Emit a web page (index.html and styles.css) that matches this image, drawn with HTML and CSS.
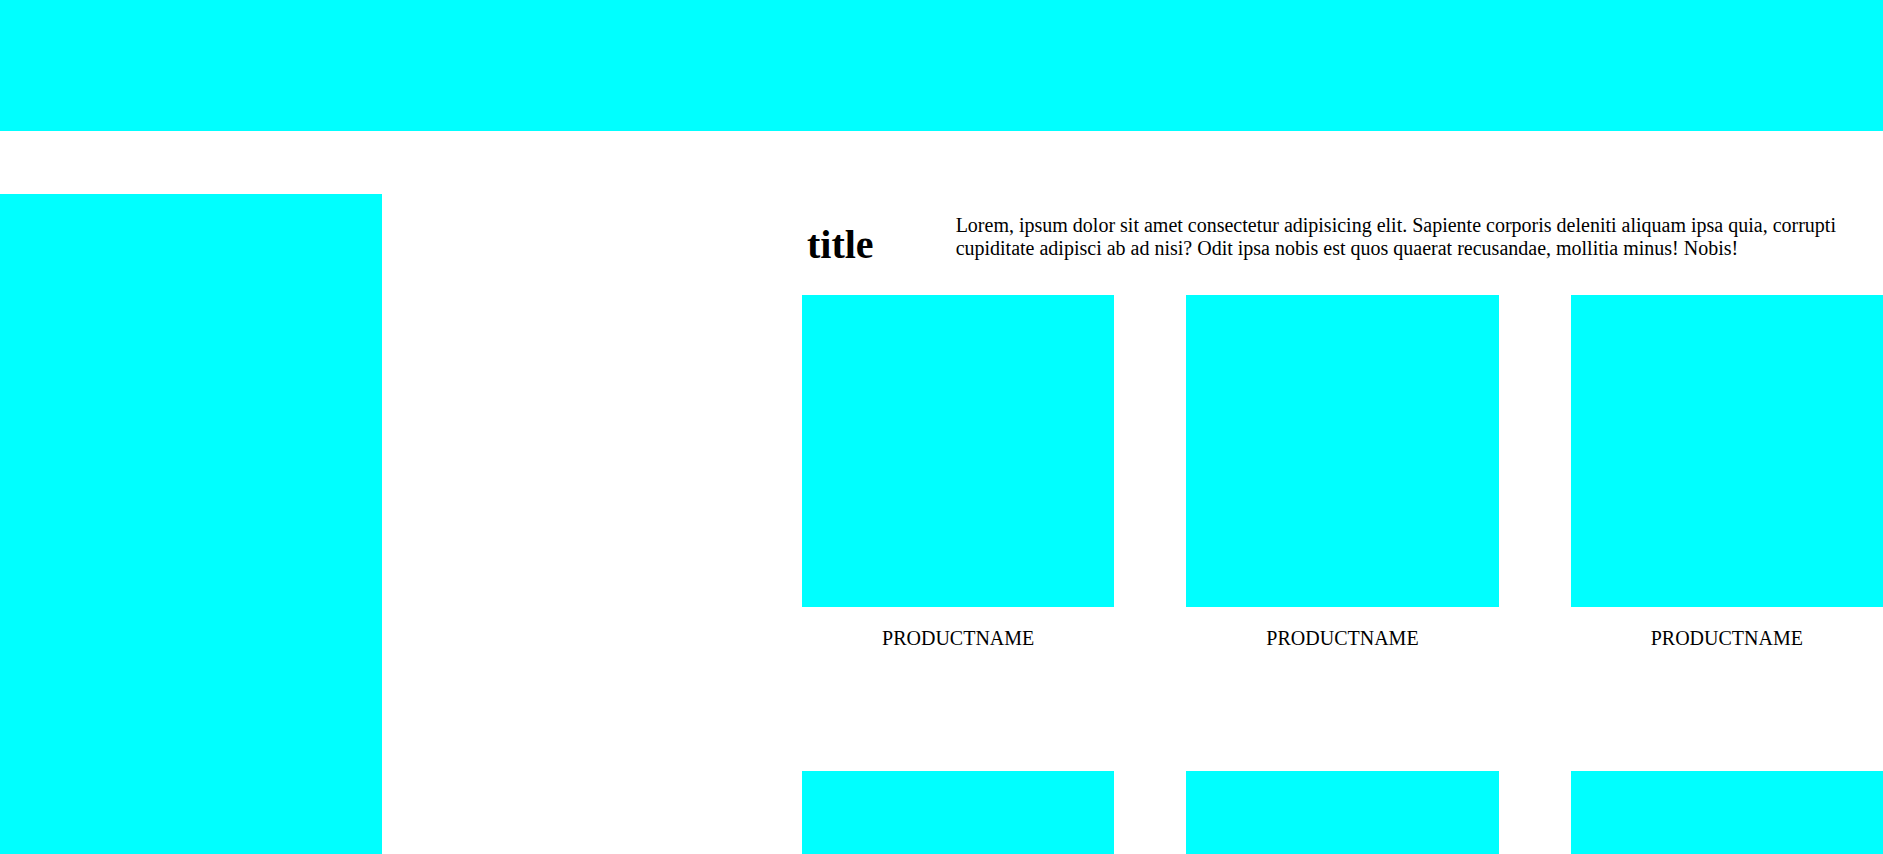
FILE: index.html
```html
<!DOCTYPE html>
<html lang="en">
<head>
<meta charset="utf-8">
<title>Products</title>
<link rel="stylesheet" href="styles.css">
</head>
<body>
<header class="topbar"></header>
<div class="layout">
  <aside class="sidebar"></aside>
  <main class="content">
    <div class="intro">
      <h1 class="title">title</h1>
      <p class="lead">Lorem, ipsum dolor sit amet consectetur adipisicing elit. Sapiente corporis deleniti aliquam ipsa quia, corrupti cupiditate adipisci ab ad nisi? Odit ipsa nobis est quos quaerat recusandae, mollitia minus! Nobis!</p>
    </div>
    <div class="products">
      <div class="card"><div class="card-img"></div><p class="card-name">PRODUCTNAME</p></div>
      <div class="card"><div class="card-img"></div><p class="card-name">PRODUCTNAME</p></div>
      <div class="card"><div class="card-img"></div><p class="card-name">PRODUCTNAME</p></div>
      <div class="card"><div class="card-img"></div><p class="card-name">PRODUCTNAME</p></div>
      <div class="card"><div class="card-img"></div><p class="card-name">PRODUCTNAME</p></div>
      <div class="card"><div class="card-img"></div><p class="card-name">PRODUCTNAME</p></div>
    </div>
  </main>
</div>
</body>
</html>
```
FILE: styles.css
```css
html, body {
  margin: 0;
  padding: 0;
}
body {
  font-family: "Liberation Serif", "Times New Roman", serif;
  font-size: 20px;
  color: #000;
  background: #fff;
}
.topbar {
  height: 131px;
  background: #00ffff;
}
.layout {
  display: flex;
  margin-top: 63px;
  align-items: flex-start;
}
.sidebar {
  flex: 0 0 382px;
  height: 1200px;
  background: #00ffff;
}
.content {
  flex: 1;
  margin-left: 420px;
  min-width: 0;
}
.intro {
  display: flex;
  padding-left: 5px;
  gap: 82px;
}
.title {
  font-size: 40px;
  font-weight: bold;
  margin: 0.67em 0;
  flex: 0 0 auto;
}
.lead {
  margin: 1em 0;
  flex: 1;
}
.products {
  display: grid;
  grid-template-columns: repeat(3, 1fr);
  column-gap: 72px;
  row-gap: 101px;
}
.card-img {
  aspect-ratio: 1 / 1;
  background: #00ffff;
}
.card-name {
  text-align: center;
  margin: 20px 0;
}
```
